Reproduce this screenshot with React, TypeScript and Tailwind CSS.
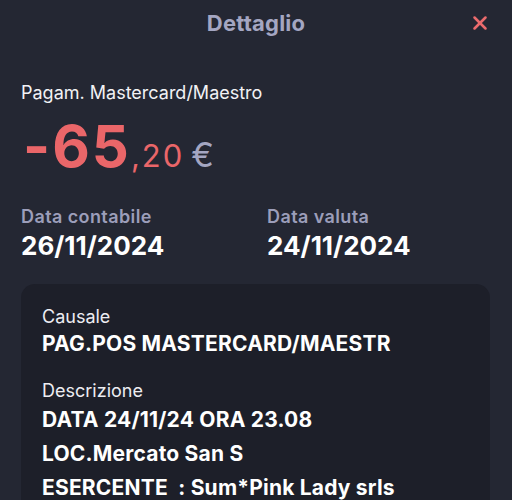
import { X } from 'lucide-react'

export default function App() {
  return (
    <div
      className="w-[512px] h-[500px] overflow-hidden bg-[#242733] text-white"
      style={{ fontFamily: 'Inter, "Noto Sans", sans-serif' }}
    >
      {/* Header */}
      <div className="relative flex h-[46px] items-center justify-center">
        <span className="text-[22px] font-bold tracking-[0.2px] text-[#a4a6c2]">Dettaglio</span>
        <X className="absolute right-[21px] top-[12px] h-[22px] w-[22px] text-[#ea6b6d]" strokeWidth={2.8} />
      </div>

      <div className="px-[21px] pt-[35px]">
        <div className="text-[18px] leading-[24px] text-[#f2f2f5]">Pagam. Mastercard/Maestro</div>

        {/* Importo */}
        <div className="mt-[9px] flex h-[64px] items-baseline pl-[2px]">
          <span className="text-[58px] font-bold leading-[64px] tracking-[2px] text-[#ea6669]">-65</span>
          <span className="text-[31px] tracking-[2px] text-[#ea6669]">,20</span>
          <span className="ml-[7px] text-[34px] text-[#a4a6c2]">€</span>
        </div>

        {/* Date */}
        <div className="mt-[27px] grid grid-cols-[246px_1fr]">
          <div>
            <div className="text-[18px] font-semibold leading-[24px] tracking-[0.4px] text-[#9c9eba]">Data contabile</div>
            <div className="mt-[1px] text-[26px] font-bold leading-[32px]">26/11/2024</div>
          </div>
          <div>
            <div className="text-[18px] font-semibold leading-[24px] tracking-[0.4px] text-[#9c9eba]">Data valuta</div>
            <div className="mt-[1px] text-[26px] font-bold leading-[32px]">24/11/2024</div>
          </div>
        </div>

        {/* Card */}
        <div className="mt-[22px] w-[469px] rounded-[14px] bg-[#1d1f29] px-[21px] pt-[21px] pb-[20px]">
          <div className="text-[18px] leading-[24px] text-[#ededf2]">Causale</div>
          <div className="text-[21px] font-bold leading-[30px] tracking-[0.2px]">PAG.POS MASTERCARD/MAESTR</div>

          <div className="mt-[20px] text-[18px] leading-[24px] text-[#ededf2]">Descrizione</div>
          <div className="flex flex-col text-[21px] font-bold leading-[34px] tracking-[0.2px]">
            <div>DATA 24/11/24 ORA 23.08</div>
            <div>LOC.Mercato San S</div>
            <div className="whitespace-pre">ESERCENTE  : Sum*Pink Lady srls</div>
          </div>
        </div>
      </div>
    </div>
  )
}
